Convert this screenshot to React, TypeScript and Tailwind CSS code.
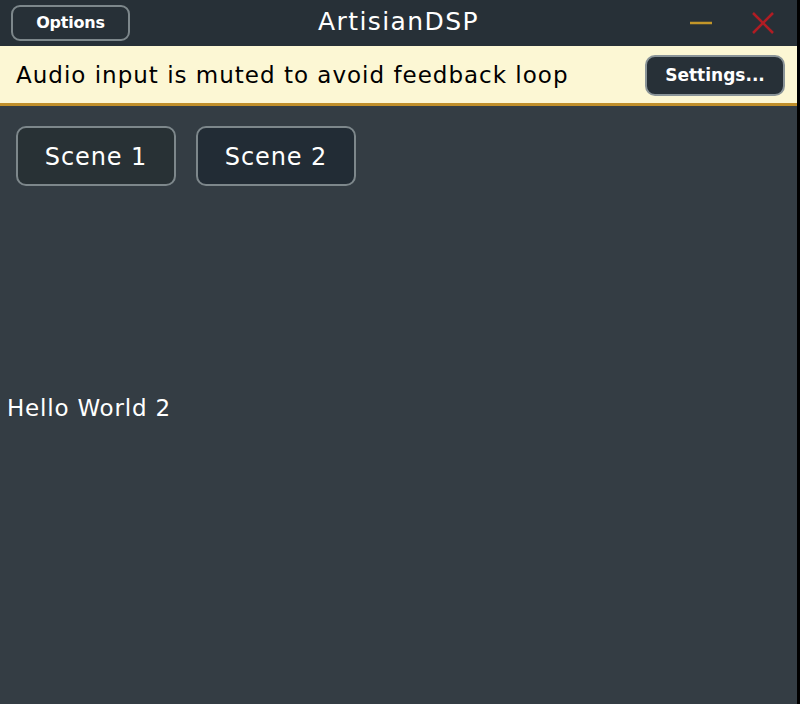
import React from 'react'

const font = { fontFamily: '"DejaVu Sans", "Noto Sans", sans-serif' }

function SceneButton({ label, active }: { label: string; active?: boolean }) {
  return (
    <button
      className={
        active
          ? 'h-[60px] w-[160px] rounded-[10px] border-2 border-[#7d878b] bg-[#222c35] pt-[2px] text-[24px] tracking-[0.9px] text-white'
          : 'h-[60px] w-[160px] rounded-[10px] border-2 border-[#7d878b] bg-[#283135] pt-[2px] text-[24px] tracking-[0.9px] text-white'
      }
    >
      {label}
    </button>
  )
}

export default function App() {
  return (
    <div className="flex h-[704px] w-[800px] overflow-hidden bg-black" style={font}>
      <div className="flex w-[797px] flex-col bg-[#343d44]">
        {/* Title bar */}
        <div className="grid h-[46px] grid-cols-[1fr_auto_1fr] items-center bg-[#273037] px-[11px]">
          <div>
            <button className="h-[36px] w-[119px] rounded-[9px] border-2 border-[#7d878b] text-[16px] font-bold tracking-[-0.2px] text-white">
              Options
            </button>
          </div>
          <div className="pb-[3px] text-[25px] tracking-[1.4px] text-white">ArtisianDSP</div>
          <div className="flex items-center justify-end gap-[40px] pr-[12px]">
            <svg width="22" height="22" viewBox="0 0 22 22">
              <line x1="0" y1="11" x2="22" y2="11" stroke="#c39629" strokeWidth="2.5" />
            </svg>
            <svg width="22" height="22" viewBox="0 0 22 22">
              <line x1="1" y1="1" x2="21" y2="21" stroke="#b01d24" strokeWidth="2.5" />
              <line x1="21" y1="1" x2="1" y2="21" stroke="#b01d24" strokeWidth="2.5" />
            </svg>
          </div>
        </div>

        {/* Warning banner */}
        <div className="flex h-[60px] items-center justify-between border-b-[3px] border-[#c08f2b] bg-[#fcf7d4] pl-[16px] pr-[12px] pt-[2px]">
          <span className="text-[23px] tracking-[1px] text-black">Audio input is muted to avoid feedback loop</span>
          <button className="h-[41px] w-[140px] rounded-[10px] border-2 border-[#8a9498] bg-[#273037] text-[17px] font-bold text-white">
            Settings...
          </button>
        </div>

        {/* Scenes */}
        <div className="flex gap-[20px] px-[16px] pt-[20px]">
          <SceneButton label="Scene 1" />
          <SceneButton label="Scene 2" active />
        </div>

        <div className="mt-[205px] pl-[7px] text-[23px] tracking-[0.8px] text-white">Hello World 2</div>
      </div>
    </div>
  )
}
